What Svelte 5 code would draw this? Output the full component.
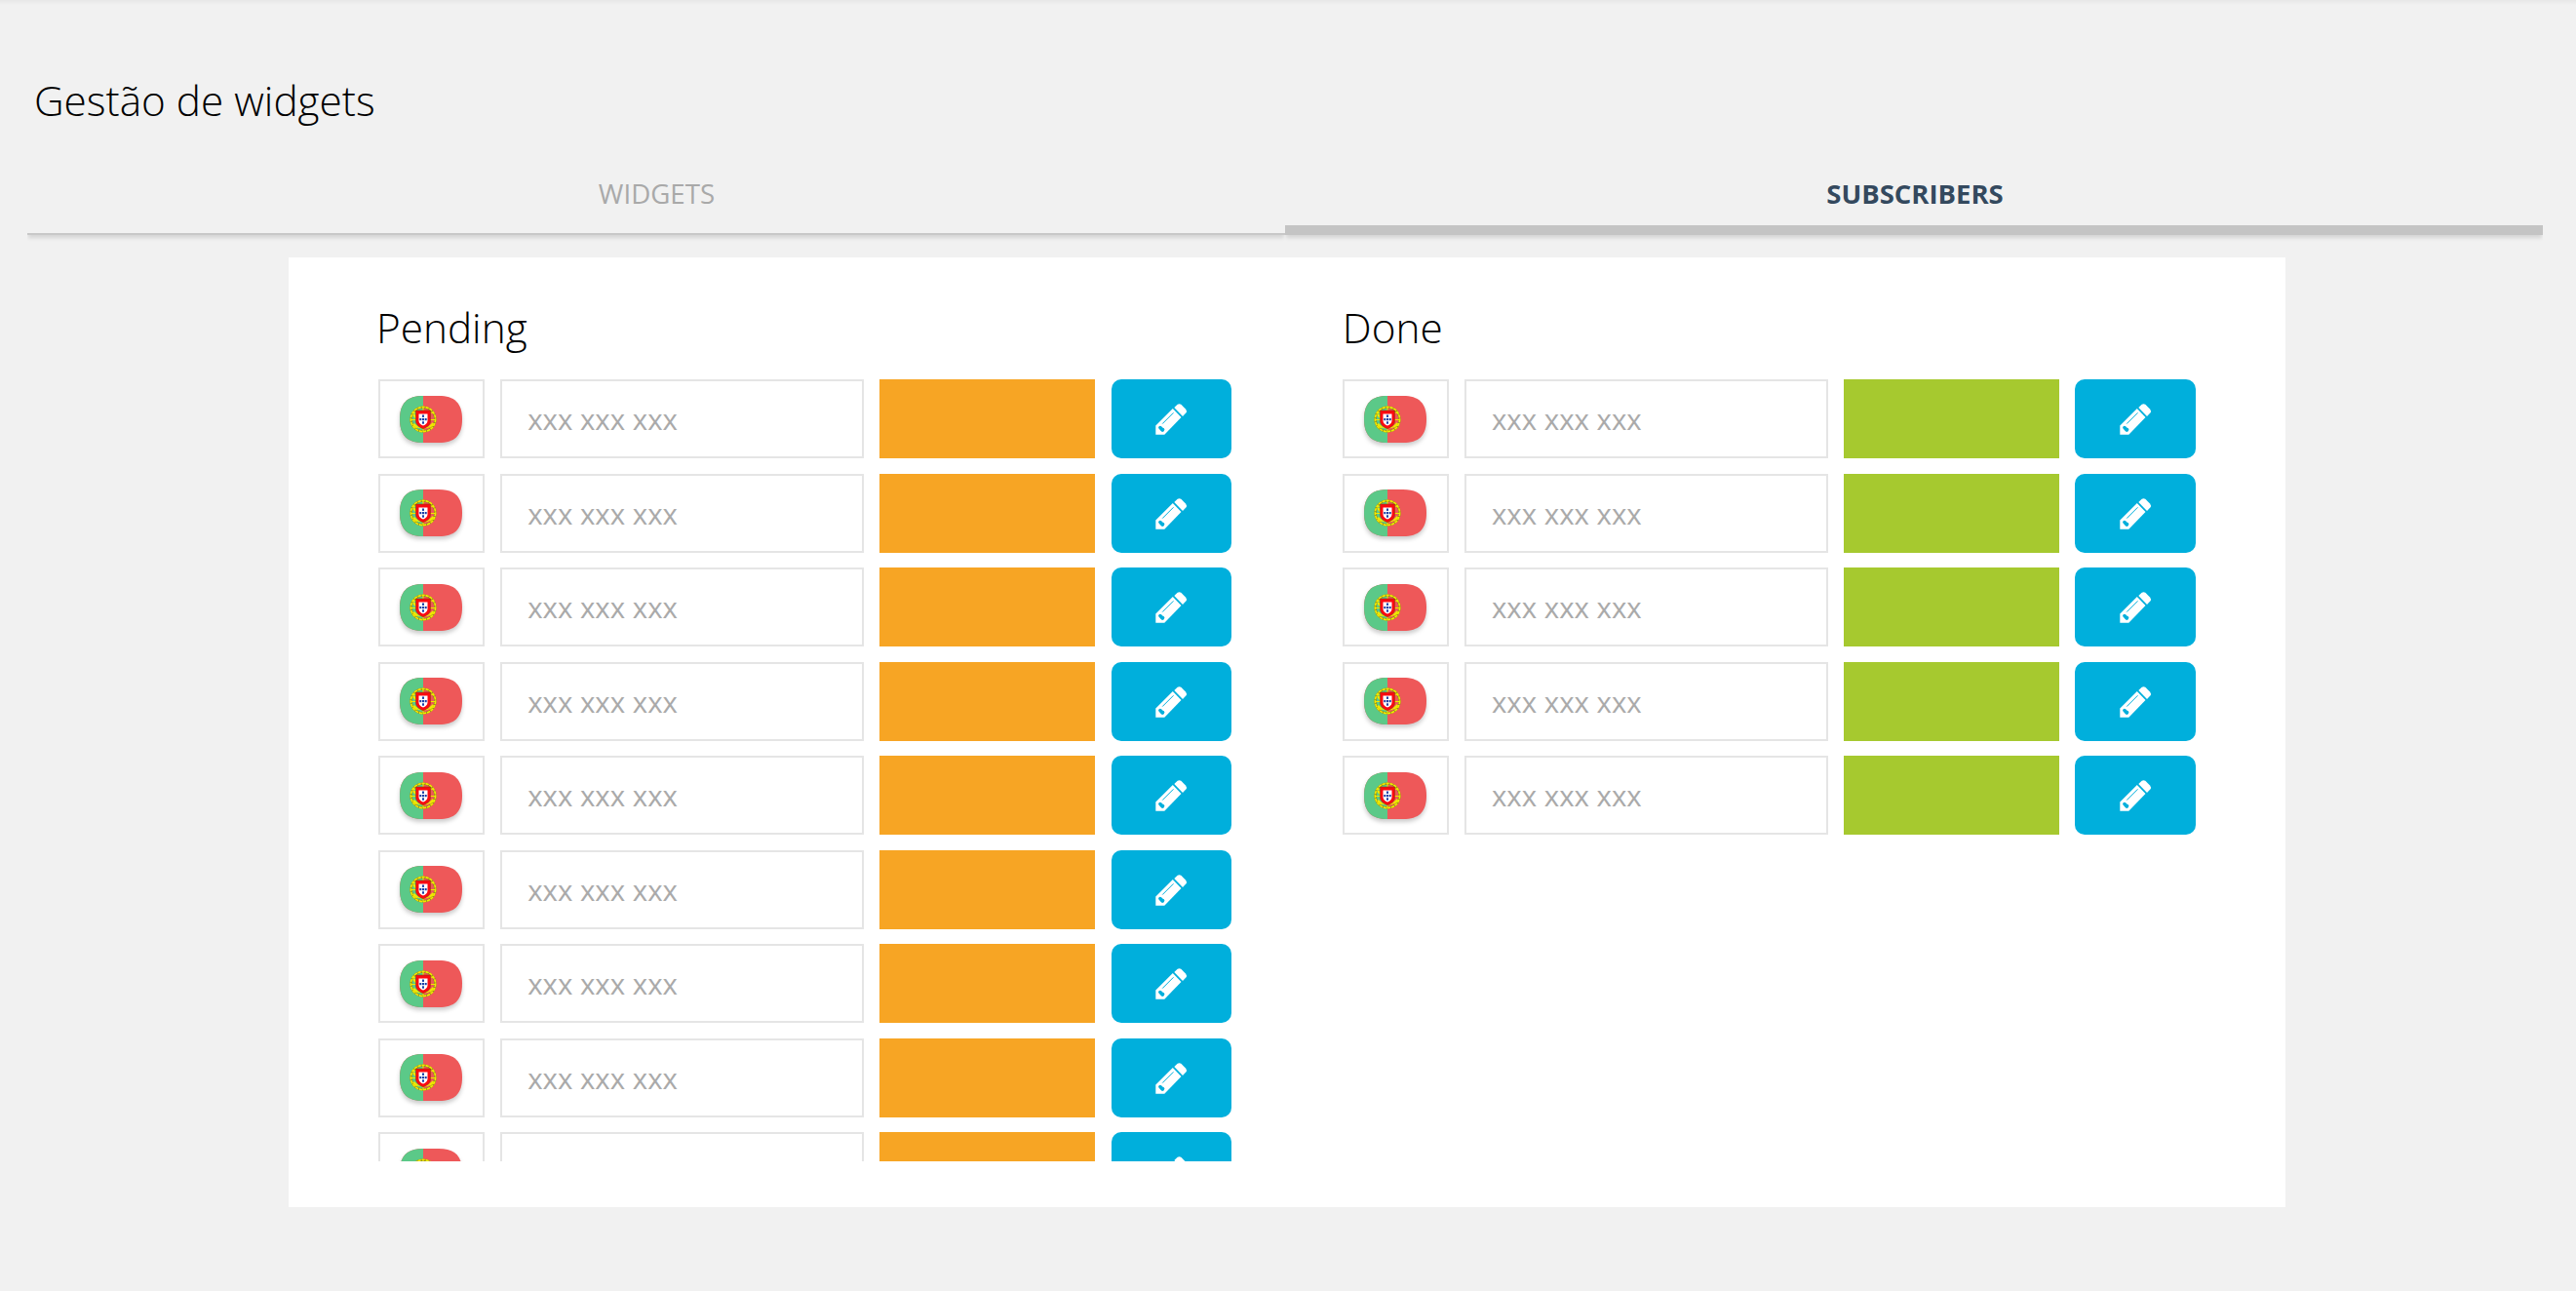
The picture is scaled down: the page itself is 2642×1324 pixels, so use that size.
<script>
  const columns = [
    { title: 'Pending', tone: 'pending', count: 9 },
    { title: 'Done', tone: 'done', count: 5 },
  ];
  const tabs = ['Widgets', 'Subscribers'];
  let active = $state(1);
</script>

{#snippet flag()}
  <svg class="flag" viewBox="0 0 64 48">
    <clipPath id="flag-shape">
      <path d="M0 24C0 7 8 0 24 0H40C56 0 64 7 64 24S56 48 40 48H24C8 48 0 41 0 24Z" />
    </clipPath>
    <g clip-path="url(#flag-shape)">
      <rect width="64" height="48" fill="#ee5859" />
      <rect width="24" height="48" fill="#5bc988" />
    </g>
    <circle cx="24" cy="24" r="12.4" fill="none" stroke="#85801a" stroke-width="2.4" />
    <g fill="none" stroke="#f0e800">
      <circle cx="24" cy="24" r="12.6" stroke-width="1.7" stroke-dasharray="3.4 .7" />
      <path d="M24 11v26M11 24.500h26M13 18q11-5 22 0M14 30q10 6 20 0" stroke-width="1.1" />
      <path d="M14 19l3.500 4M34.500 28l-4 4M14 29l4 3.500" stroke-width="2.4" />
    </g>
    <path d="M16.500 15h15v10.500c0 4-3 6.300-7.500 8.300c-4.500-2-7.500-4.300-7.500-8.300z" fill="#fa0a10" stroke="#8d3b10" stroke-width=".6" />
    <path d="M19.500 18.500h9v7c0 2.500-2 4-4.500 5c-2.500-1-4.500-2.500-4.500-5z" fill="#fff" />
    <g fill="#1b3fa5">
      <rect x="23" y="19.500" width="2" height="2.400" />
      <rect x="23" y="23" width="2" height="2.200" />
      <rect x="23" y="26.300" width="2" height="2.400" />
      <rect x="20.300" y="23" width="2" height="2.200" />
      <rect x="25.700" y="23" width="2" height="2.200" />
    </g>
  </svg>
{/snippet}

{#snippet pencil()}
  <svg class="pencil" viewBox="0 0 32 32">
    <path fill="#fff" d="M.3 31.700V22.400L17.800 5L26.500 13.900L9.300 31.700Z" />
    <path fill="#fff" d="M19.300 4L22.700 .8Q24.500-.5 26.300 .8L31 5.500Q32.800 7.500 31.300 9.500L28 13Z" />
    <path fill="none" stroke="#00afdc" stroke-width="1" stroke-linecap="round" d="M7.500 20.300L18.200 9.600" />
    <path fill="none" stroke="#00afdc" stroke-width="3.500" stroke-linecap="round" d="M4.900 24.600L7.300 27" />
    <circle cx="7.400" cy="26.600" r="1.900" fill="#00afdc" />
  </svg>
{/snippet}

<div class="page">
  <h1>Gestão de widgets</h1>
  <nav class="tabs">
    {#each tabs as tab, i}
      <button class="tab" class:active={active === i} onclick={() => (active = i)}>{tab}</button>
    {/each}
  </nav>
  <main class="panel">
    {#each columns as column}
      <section>
        <h2>{column.title}</h2>
        <div class="list">
          {#each { length: column.count } as _}
            <div class="row">
              <div class="box country">{@render flag()}</div>
              <div class="box phone">xxx xxx xxx</div>
              <div class="status {column.tone}"></div>
              <button class="edit" aria-label="Edit">{@render pencil()}</button>
            </div>
          {/each}
        </div>
      </section>
    {/each}
  </main>
</div>

<style>
  :global(body) {
    background: #f1f1f1;
  }
  .page {
    box-sizing: border-box;
    height: 1324px;
    overflow: hidden;
    padding: 73px 34px 0 28px;
    background: linear-gradient(#e7e7e7, #f1f1f1 5px);
    font-family: 'Open Sans', sans-serif;
    color: #000;
  }
  h1,
  h2 {
    margin: 0;
    font-size: 42.300px;
    font-weight: 300;
    line-height: 60px;
  }
  h1 {
    padding-left: 7px;
  }
  h2 {
    margin-left: -2px;
  }
  section + section h2 {
    margin-left: 0;
  }
  .tabs {
    display: grid;
    grid-template-columns: 1fr 1fr;
    align-items: end;
    height: 108px;
  }
  .tab {
    box-sizing: border-box;
    height: 76px;
    padding: 0 0 8px 1px;
    border: 0;
    border-bottom: 2px solid #c8c8c8;
    background: none;
    box-shadow: 0 4px 4px -1px rgba(0, 0, 0, 0.12);
    clip-path: inset(0 0 -8px 0);
    font: 400 27.700px/66px 'Open Sans', sans-serif;
    text-transform: uppercase;
    color: #a9a9a9;
  }
  .tab.active {
    padding: 1px 0 0 2px;
    border-bottom: 10px solid #c4c4c4;
    font-size: 27.500px;
    font-weight: 700;
    line-height: 65px;
    color: #34495e;
  }
  .panel {
    box-sizing: border-box;
    display: flex;
    gap: 113.500px;
    width: 2048px;
    height: 974px;
    margin: 23px 0 0 268px;
    padding: 42px 92px 0;
    background: #fff;
  }
  section {
    width: 875.300px;
    flex: none;
  }
  .list {
    display: flex;
    flex-direction: column;
    gap: 15.500px;
    height: 802px;
    margin-top: 23px;
    overflow: hidden;
  }
  .row {
    display: flex;
    flex: none;
    gap: 16.200px;
    height: 81px;
  }
  .box {
    box-sizing: border-box;
    flex: none;
    border: 2px solid #e5e5e5;
    background: #fff;
  }
  .country {
    width: 109px;
    display: flex;
    align-items: center;
    justify-content: center;
  }
  .flag {
    width: 64px;
    height: 48px;
    margin-right: 1px;
    filter: drop-shadow(0 3px 2px rgba(0, 0, 0, 0.2));
  }
  .phone {
    width: 373px;
    padding-left: 26px;
    font-size: 29.400px;
    line-height: 78px;
    color: #aaa;
  }
  .status {
    flex: none;
    width: 221px;
  }
  .pending {
    background: #f7a524;
  }
  .done {
    background: #a6c92f;
  }
  .edit {
    display: flex;
    flex: none;
    align-items: center;
    justify-content: center;
    width: 123.500px;
    padding: 1px 0 0;
    border: 0;
    border-radius: 10px;
    background: #00afdc;
  }
  .pencil {
    width: 32px;
    height: 32px;
    overflow: visible;
  }
</style>
